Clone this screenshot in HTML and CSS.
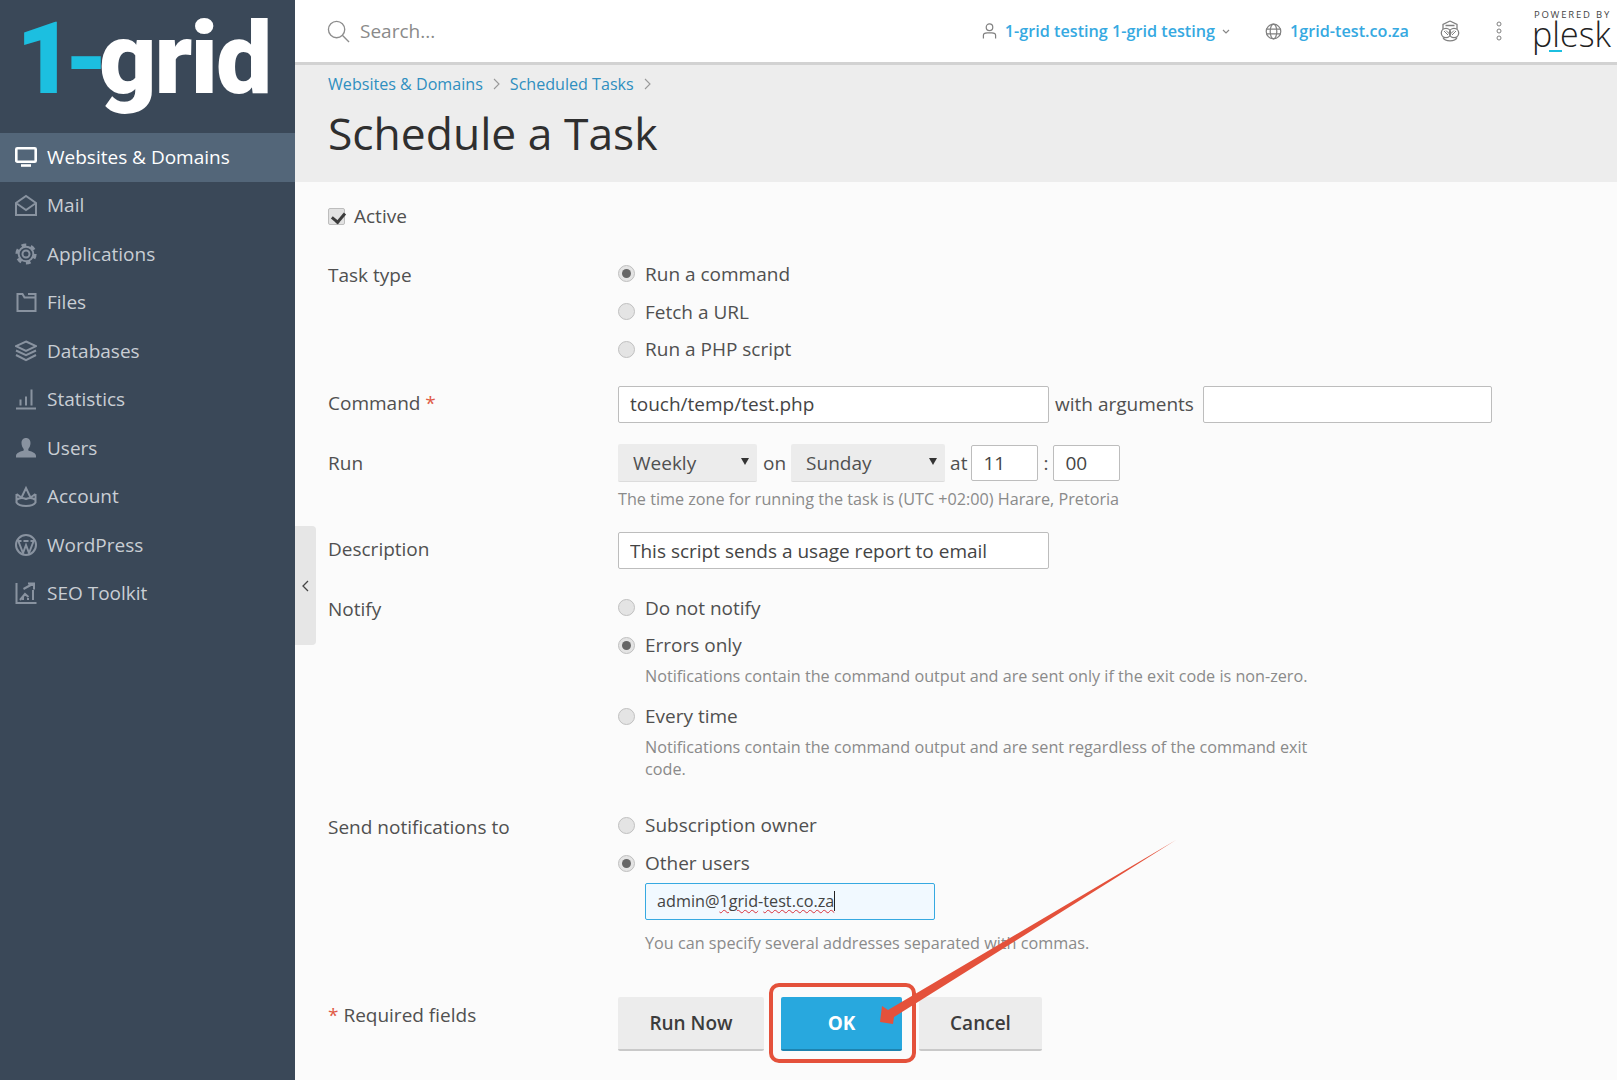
FILE: index.html
```html
<!DOCTYPE html>
<html lang="en">
<head>
<meta charset="utf-8">
<title>Schedule a Task</title>
<link rel="stylesheet" href="styles.css">
</head>
<body>
<div class="app">
  <aside class="sidebar">
    <div class="logo"><span class="logo-one">1-</span>grid</div>
    <nav class="nav">
      <a class="nav-item active"><svg class="nav-icon" viewBox="0 0 22 22"><rect x="1.300" y="2.300" width="19.400" height="13.400" rx="1" /><path d="M6 19.500h10" /></svg>Websites &amp; Domains</a>
      <a class="nav-item"><svg class="nav-icon" viewBox="0 0 22 22"><path d="M1 9v12h20V9L11 2zM1 9l10 7 10-7" /></svg>Mail</a>
      <a class="nav-item"><svg class="nav-icon" viewBox="0 0 22 22"><circle cx="11" cy="11" r="3.500" /><circle cx="11" cy="11" r="7.300" /><circle class="gear-teeth" cx="11" cy="11" r="9" /></svg>Applications</a>
      <a class="nav-item"><svg class="nav-icon" viewBox="0 0 22 22"><path d="M2.500 3v17h18V6.500H9.500L7.500 3zM13 3h7.500v3.500" /></svg>Files</a>
      <a class="nav-item"><svg class="nav-icon" viewBox="0 0 22 22"><path d="M11 1.500l10 4.700-10 4.700L1 6.200zM1 10.500l10 4.700 10-4.700M1 15l10 5.200 10-5.200" /></svg>Databases</a>
      <a class="nav-item"><svg class="nav-icon" viewBox="0 0 22 22"><path d="M1 20.500h20M5.500 17.500v-6M11 17.500v-9M16.500 17.500V1.500" /></svg>Statistics</a>
      <a class="nav-item"><svg class="nav-icon solid" viewBox="0 0 22 22"><path d="M11 1c3 0 4.500 2.300 4.500 5 0 2.500-1 4.500-2.200 6v1.500c3 1 7.700 2.200 7.700 5.500v1.500H1V19c0-3.300 4.700-4.500 7.700-5.500V12C7.500 10.500 6.500 8.500 6.500 6c0-2.700 1.500-5 4.500-5z" /></svg>Users</a>
      <a class="nav-item"><svg class="nav-icon" viewBox="0 0 22 22"><path d="M1.500 9v8.500C3 20 8 21 11 21s8-1 9.500-3.500V9M1.500 9l5 3.500L11 3l4.500 9.500 5-3.500M1.500 15c3-2.500 6-2.500 9.500-1 3.500-1.500 6.500-1.500 9.500 1" /></svg>Account</a>
      <a class="nav-item"><svg class="nav-icon" viewBox="0 0 22 22"><circle cx="11" cy="11" r="10" /><path d="M3.500 7.500L8 19l3-8 3 8 4.500-11.500M2.500 7h4M8.500 7h5M15.500 7h4" /></svg>WordPress</a>
      <a class="nav-item"><svg class="nav-icon" viewBox="0 0 22 22"><path d="M1.500 1v20h20M5 18l5-6 3.500 3M8.500 7l10-5.500M13 1.500h6v6M8 18v-3M13 18v-2M18 18V8" /></svg>SEO Toolkit</a>
    </nav>
  </aside>
  <main class="main">
    <header class="topbar">
      <svg class="search-icon" viewBox="0 0 24 24"><circle cx="10" cy="10" r="8.500" /><path d="M16 16l7 7" /></svg>
      <span class="search-text">Search...</span>
      <div class="top-actions">
        <svg class="top-icon user-icon" viewBox="0 0 16 18"><circle cx="8" cy="5" r="3.500" /><path d="M1.500 17v-3.500c0-1.500 2-2.500 4-2.500h5c2 0 4 1 4 2.500V17" /></svg>
        <a class="top-link name-link">1-grid testing 1-grid testing</a>
        <svg class="caret" viewBox="0 0 8 5"><path d="M1 1l3 3 3-3" /></svg>
        <svg class="top-icon globe" viewBox="0 0 18 18"><circle cx="9" cy="9" r="7.700" /><ellipse cx="9" cy="9" rx="3.500" ry="7.700" /><path d="M1.300 6.500h15.400M1.300 11.500h15.400" /></svg>
        <a class="top-link domain-link">1grid-test.co.za</a>
        <svg class="top-icon owl" viewBox="0 0 20 22"><path d="M10 1l7 3.500V9M10 1L3 4.500V9M5.500 5.500h9" /><circle cx="6" cy="13" r="4.700" /><circle cx="14" cy="13" r="4.700" /><path d="M3 17.500c2 4.500 12 4.500 14 0" /><path class="owl-fill" d="M4 11l4 4M6 10.500l3 3M16 11l-4 4M14 10.500l-3 3" /></svg>
        <svg class="dots" viewBox="0 0 6 20"><circle cx="3" cy="3" r="2" /><circle cx="3" cy="10" r="2" /><circle cx="3" cy="17" r="2" /></svg>
        <div class="plesk">
          <span class="powered">POWERED BY</span>
          <span class="plesk-word">plesk</span>
          <span class="plesk-bar"></span>
        </div>
      </div>
    </header>
    <section class="page-head">
      <div class="crumbs">
        <a>Websites &amp; Domains</a>
        <svg class="crumb-sep" viewBox="0 0 7 12"><path d="M1 1l5 5-5 5" /></svg>
        <a>Scheduled Tasks</a>
        <svg class="crumb-sep" viewBox="0 0 7 12"><path d="M1 1l5 5-5 5" /></svg>
      </div>
      <h1 class="title">Schedule a Task</h1>
    </section>
    <form class="form">
      <label class="check-row"><input class="check" type="checkbox" checked><span>Active</span></label>

      <div class="row row-task">
        <div class="label label-radio">Task type</div>
        <div class="field">
          <label class="opt"><input class="radio" type="radio" name="t" checked>Run a command</label>
          <label class="opt"><input class="radio" type="radio" name="t">Fetch a URL</label>
          <label class="opt"><input class="radio" type="radio" name="t">Run a PHP script</label>
        </div>
      </div>

      <div class="row row-command">
        <div class="label label-input">Command <span class="req">*</span></div>
        <div class="field inline">
          <input class="input w-main" value="touch/temp/test.php">
          <span class="word args-word">with arguments</span>
          <input class="input w-args">
        </div>
      </div>

      <div class="row row-run">
        <div class="label">Run</div>
        <div class="field">
          <div class="inline">
            <span class="select-wrap w-freq"><select class="select"><option>Weekly</option></select></span>
            <span class="word w-on">on</span>
            <span class="select-wrap w-day"><select class="select"><option>Sunday</option></select></span>
            <span class="word w-at">at</span>
            <input class="input w-time" value="11">
            <span class="word w-colon">:</span>
            <input class="input w-time" value="00">
          </div>
          <div class="hint hint-tz">The time zone for running the task is (UTC +02:00) Harare, Pretoria</div>
        </div>
      </div>

      <div class="row row-desc">
        <div class="label label-input">Description</div>
        <div class="field"><input class="input w-main input-low" value="This script sends a usage report to email"></div>
      </div>

      <div class="row row-notify">
        <div class="label label-radio">Notify</div>
        <div class="field">
          <label class="opt"><input class="radio" type="radio" name="n">Do not notify</label>
          <label class="opt"><input class="radio" type="radio" name="n" checked>Errors only</label>
          <div class="hint indent hint-low">Notifications contain the command output and are sent only if the exit code is non-zero.</div>
          <label class="opt opt-gap"><input class="radio" type="radio" name="n">Every time</label>
          <div class="hint indent narrow">Notifications contain the command output and are sent regardless of the command exit code.</div>
        </div>
      </div>

      <div class="row row-send">
        <div class="label label-radio">Send notifications to</div>
        <div class="field">
          <label class="opt"><input class="radio" type="radio" name="s">Subscription owner</label>
          <label class="opt"><input class="radio" type="radio" name="s" checked>Other users</label>
          <div class="email">admin@<span class="typo">1grid</span>-<span class="typo">test.co.za</span><span class="cursor"></span></div>
          <div class="hint indent hint-email">You can specify several addresses separated with commas.</div>
        </div>
      </div>

      <div class="row row-buttons">
        <div class="label label-req"><span class="req">*</span> Required fields</div>
        <div class="field buttons">
          <button class="btn btn-run" type="button">Run Now</button>
          <button class="btn btn-ok" type="button">OK</button>
          <button class="btn btn-cancel" type="button">Cancel</button>
        </div>
      </div>
    </form>
    <div class="collapse"><svg viewBox="0 0 7 12"><path d="M6 1L1 6l5 5" /></svg></div>
  </main>
  <div class="callout"></div>
  <svg class="arrow" viewBox="0 0 1617 1080"><polygon points="1176,840 894,1017 893,1024 880,1022 882,1006 888,1010" /></svg>
</div>
</body>
</html>
```

FILE: styles.css
```css
* { box-sizing: border-box; }
html, body { margin: 0; height: 100%; }
body {
  font-family: "Open Sans", "Noto Sans", sans-serif;
  font-size: 19px;
  line-height: 22px;
  color: #505050;
  background: #fbfbfb;
  overflow: hidden;
}
a { color: inherit; text-decoration: none; }

.app { position: relative; display: flex; width: 1617px; height: 1080px; overflow: hidden; }

/* sidebar */
.sidebar { flex: 0 0 295px; background: #3a4858; }
.logo {
  height: 133px;
  padding: 0 0 0 16px;
  font-family: Roboto, "Liberation Sans", sans-serif;
  font-weight: 900;
  font-size: 100px;
  line-height: 118px;
  letter-spacing: -2px;
  color: #fff;
  white-space: nowrap;
}
.logo-one { color: #1cbfe0; letter-spacing: -10px; }
.nav { display: flex; flex-direction: column; }
.nav-item {
  display: flex;
  align-items: center;
  gap: 10px;
  height: 48.5px;
  padding: 0 0 1px 15px;
  font-size: 19px;
  color: #c9ced4;
}
.nav-item.active { background: #536679; color: #fff; }
.nav-icon { width: 22px; height: 22px; flex: none; fill: none; stroke: #8993a0; stroke-width: 2; }
.nav-item.active .nav-icon { stroke: #fff; stroke-width: 2.600; }
.nav-icon.solid { fill: #8993a0; stroke: none; }
.nav-icon .gear-teeth { stroke-width: 3.200; stroke-dasharray: 4.700 4.720; }

/* main */
.main { position: relative; flex: 1; min-width: 0; }
.topbar {
  display: flex;
  align-items: center;
  height: 65px;
  padding-left: 32px;
  background: #fff;
  border-bottom: 3px solid #d2d2d2;
}
.search-icon { width: 23px; height: 23px; fill: none; stroke: #8d8d8d; stroke-width: 1.400; }
.search-text { margin-left: 10px; color: #8a8a8a; font-size: 19px; }
.top-actions { display: flex; align-items: center; margin-left: auto; height: 100%; }
.top-icon { flex: none; fill: none; stroke: #808080; stroke-width: 1.300; }
.user-icon { width: 15px; height: 18px; margin-right: 8px; }
.top-link { color: #36a9e1; font-size: 16.200px; font-weight: 600; white-space: nowrap; }
.caret { width: 8px; height: 5px; margin: 0 35px 0 7px; fill: none; stroke: #888; stroke-width: 1.200; }
.globe { width: 17px; height: 17px; margin-right: 8px; }
.owl { width: 20px; height: 22px; margin: 0 36px 0 31px; }
.owl-fill { stroke-width: 1; }
.dots { width: 6px; height: 20px; margin-right: 29px; fill: none; stroke: #808080; stroke-width: 1; }
.plesk { position: relative; display: flex; flex-direction: column; align-items: flex-end; width: 80px; margin: 0 6px 4px 0; color: #222; }
.powered { font-size: 9.500px; line-height: 12px; letter-spacing: 1.800px; color: #444; white-space: nowrap; }
.plesk-word { margin-top: -3px; font-size: 34px; line-height: 32px; font-weight: 300; }
.plesk-bar { position: absolute; left: 18px; bottom: -2px; width: 13px; height: 2px; background: #1cbfe0; }

.page-head { height: 117px; padding: 8px 33px 0; background: #ededed; }
.crumbs { display: flex; align-items: center; height: 22px; font-size: 16.100px; color: #2f8fc0; }
.crumb-sep { width: 7px; height: 12px; margin: 0 10px; fill: none; stroke: #999; stroke-width: 1.100; }
.title { margin: 8px 0 0; font-size: 44.400px; line-height: 60px; font-weight: 400; color: #2f2f2f; }

/* form */
.form { padding: 21px 0 0 33px; }
.check-row { display: flex; align-items: center; height: 26px; }
.check { appearance: none; position: relative; width: 17px; height: 17px; margin: 0 9px 0 0; border: 1px solid #bdbdbd; border-radius: 2px; background: #e2e2e2; }
.check::after { content: ""; position: absolute; left: 5px; top: 1px; width: 6px; height: 10px; border: solid #3c3c3c; border-width: 0 3px 3px 0; transform: rotate(40deg); }
.row { display: flex; }
.label { flex: 0 0 290px; padding-top: 8px; }
.label-radio { padding-top: 9px; }
.label-input { padding-top: 6px; }
.label-req { padding-top: 7px; }
.req { color: #e05a45; }
.field { flex: 1; min-width: 0; }
.inline { display: flex; align-items: center; }
.row-task { margin-top: 26px; }
.row-command { margin-top: 17.900px; }
.row-run { margin-top: 21px; }
.row-desc { margin-top: 22px; }
.row-notify { margin-top: 20px; }
.row-send { margin-top: 26.600px; }
.row-buttons { margin-top: 43.300px; }

.opt { display: flex; align-items: center; height: 37.700px; }
.opt-gap { margin-top: 10px; }
.radio { appearance: none; position: relative; flex: none; width: 17px; height: 17px; margin: 0 10px 0 0; border: 1px solid #c0c0c0; border-radius: 50%; background: #e4e4e4; }
.radio:checked::after { content: ""; position: absolute; left: 3px; top: 3px; width: 9px; height: 9px; border-radius: 50%; background: #666; }

.input {
  display: block;
  height: 37px;
  padding: 0 11px;
  border: 1px solid #bdbdbd;
  border-radius: 2px;
  background: #fff;
  font: inherit;
  color: #444;
  outline: none;
}
.input-low { padding-top: 2px; }
.w-main { width: 431px; }
.w-args { width: 289px; }
.w-time { width: 67px; height: 36px; }
.word { white-space: nowrap; }
.args-word { margin: 0 9px 0 6px; }
.w-on { margin: 0 5px 0 6px; }
.w-at { margin: 0 4px 0 5px; }
.w-colon { margin: 0 5px 0 5px; }
.select-wrap { position: relative; display: block; height: 38px; }
.select-wrap::after {
  content: "";
  position: absolute;
  top: 14px;
  right: 8px;
  border: 4px solid transparent;
  border-top: 7px solid #333;
  border-bottom: 0;
}
.w-freq { width: 139px; }
.w-day { width: 154px; }
.select {
  appearance: none;
  display: block;
  width: 100%;
  height: 100%;
  padding: 2px 0 0 15px;
  border: 0;
  border-bottom: 1px solid #dcdcdc;
  border-radius: 2px;
  background: #ececec;
  font: inherit;
  color: #505050;
}
.hint { font-size: 16.200px; color: #8a8a8a; }
.hint-tz { margin-top: 6px; }
.hint-low { margin-top: 1px; }
.indent { margin-left: 27px; }
.narrow { width: 680px; margin-top: 1px; }
.email {
  display: flex;
  align-items: center;
  width: 290px;
  height: 37px;
  margin: 1px 0 0 27px;
  padding-left: 11px;
  border: 1px solid #36a9e1;
  border-radius: 2px;
  background: #f1f9ff;
  font-size: 16.200px;
  color: #444;
  white-space: pre;
}
.typo { text-decoration: underline wavy #d8323c 1px; text-underline-offset: 2px; }
.cursor { width: 1px; height: 20px; background: #222; }
.hint-email { margin-top: 12px; }

.buttons { display: flex; }
.btn {
  height: 54px;
  border: 0;
  border-bottom: 2px solid #c9c9c9;
  border-radius: 2px;
  background: #ececec;
  font: inherit;
  font-weight: 600;
  color: #3c3c3c;
}
.btn-run { width: 146px; }
.btn-ok { width: 121px; margin-left: 17px; background: #28a8de; border-bottom-color: #1d83b0; color: #fff; font-weight: 700; }
.btn-cancel { width: 123px; margin-left: 17px; }

.collapse {
  position: absolute;
  left: 0;
  top: 526px;
  display: flex;
  align-items: center;
  justify-content: center;
  width: 21px;
  height: 119px;
  border-radius: 0 4px 4px 0;
  background: #e6e6e6;
}
.collapse svg { width: 7px; height: 12px; fill: none; stroke: #444; stroke-width: 1.300; }

/* annotation */
.callout {
  position: absolute;
  left: 769px;
  top: 983px;
  width: 147px;
  height: 80px;
  border: 4px solid #e4513b;
  border-radius: 10px;
}
.arrow { position: absolute; left: 0; top: 0; width: 1617px; height: 1080px; pointer-events: none; fill: #e4513b; }
```
